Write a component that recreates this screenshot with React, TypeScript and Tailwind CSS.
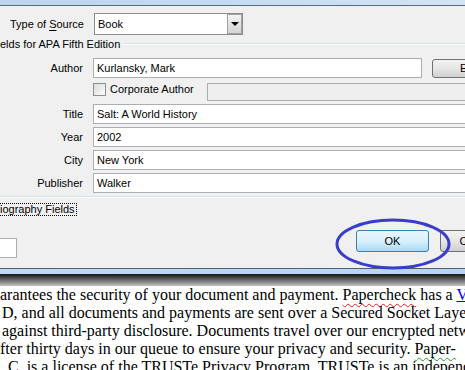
// Source editor dialog over a document page, with a hand-drawn ring around OK
const sans = "font-['Liberation_Sans',Arial,sans-serif]";

function TextBox({ value, className = "" }: { value?: string; className?: string }) {
	return (
		<div
			className={`flex h-[20px] items-center border border-[#abadb3] bg-white pl-[3px] text-[11px] text-black ${className}`}
		>
			{value}
		</div>
	);
}

function FieldRow({ label, value, last }: { label: string; value: string; last?: boolean }) {
	return (
		<div className="mt-[3px] flex h-[20px] items-center">
			<div className="w-[83px] shrink-0 text-right">{label}</div>
			<TextBox value={value} className={`ml-[10px] ${last ? "" : ""} w-[400px] shrink-0`} />
		</div>
	);
}

function WinButton({ label, primary, className = "" }: { label: string; primary?: boolean; className?: string }) {
	return (
		<div
			className={`flex shrink-0 items-center justify-center rounded-[3px] border ${
				primary
					? "border-[#3c7fb1] bg-gradient-to-b from-[#eaf6fd] via-[#d9f0fc] to-[#a7d9f5]"
					: "border-[#707070] bg-gradient-to-b from-[#f2f2f2] via-[#e6e6e6] to-[#cfcfcf]"
			} ${className}`}
		>
			{label}
		</div>
	);
}

function Dialog() {
	return (
		<div className={`flex h-[268px] flex-col ${sans} text-[11px] text-black`}>
			<div className="h-[5px] bg-gradient-to-r from-[#bcd5ee] via-[#c4dcf3] to-[#d2e4f5]" />
			<div className="h-px bg-[#5d6a78]" />
			<div className="flex-1 overflow-hidden bg-[#f0f0f0] pt-[7px]">
				{/* type of source */}
				<div className="flex h-[22px] items-center">
					<div className="w-[84px] shrink-0 text-right">
						Type of <span className="underline underline-offset-[2px]">S</span>ource
					</div>
					<div className="ml-[10px] flex h-[22px] w-[149px] border border-[#8c8c8c] bg-white">
						<div className="flex flex-1 items-center pl-[3px]">Book</div>
						<div className="flex w-[15px] items-center justify-center border border-[#a0a0a0] bg-gradient-to-b from-[#f4f4f4] to-[#d4d4d4]">
							<div className="h-0 w-0 border-x-[4px] border-t-[4px] border-x-transparent border-t-black" />
						</div>
					</div>
				</div>

				{/* group legend */}
				<div className="mt-[2px] flex h-[14px] items-center">
					<span className="whitespace-nowrap">elds for APA Fifth Edition</span>
					<div className="ml-[3px] h-[2px] flex-1 border-t border-b border-t-[#d5dfe5] border-b-white" />
				</div>

				{/* author */}
				<div className="mt-[7px] flex h-[20px] items-center">
					<div className="w-[83px] shrink-0 text-right">Author</div>
					<TextBox value="Kurlansky, Mark" className="ml-[10px] w-[329px] shrink-0" />
					<WinButton label="Edit" className="ml-[10px] h-[19px] w-[75px]" />
				</div>

				{/* corporate author */}
				<div className="mt-[5px] flex h-[18px] items-start">
					<div className="ml-[93px] flex h-[13px] w-[114px] shrink-0 items-center gap-[4px]">
						<div className="h-[13px] w-[13px] shrink-0 border border-[#8e8f8f] bg-gradient-to-br from-[#dcdcdc] to-[#fbfbfb]" />
						<span className="whitespace-nowrap">Corporate Author</span>
					</div>
					<div className="h-[18px] w-[300px] shrink-0 border border-[#adadad] bg-[#efefef]" />
				</div>

				<FieldRow label="Title" value="Salt: A World History" />
				<FieldRow label="Year" value="2002" />
				<FieldRow label="City" value="New York" />
				<FieldRow label="Publisher" value="Walker" last />

				{/* group bottom */}
				<div className="mt-[3px] h-[2px] border-t border-b border-t-[#d5dfe5] border-b-white" />

				{/* show all fields */}
				<div className="mt-[5px] flex h-[13px]">
					<span className="-ml-[2px] whitespace-nowrap border border-dotted border-black px-[1px] leading-[11px]">
						iography Fields
					</span>
				</div>

				{/* bottom buttons */}
				<div className="mt-[14px] flex items-start">
					<div className="mt-[8px] h-[20px] w-[17px] shrink-0 border border-[#abadb3] border-l-0 bg-white" />
					<WinButton label="OK" primary className="ml-[339px] h-[22px] w-[73px]" />
					<WinButton label="Cancel" className="ml-[11px] h-[22px] w-[73px]" />
				</div>
			</div>
		</div>
	);
}

function Page() {
	const red = "underline decoration-wavy decoration-[#e02020] decoration-1 underline-offset-[3px]";
	const green = "underline decoration-wavy decoration-[#2a9a2a] decoration-1 underline-offset-[3px]";
	return (
		<div>
			<div className="h-px bg-[#555f6c]" />
			<div className="h-[5px] bg-gradient-to-r from-[#bfdaf5] to-[#b7d5f2]" />
			<div className="h-[12px] bg-gradient-to-b from-[#161616] via-[#6b6b6b] to-[#c4c4c4]" />
			<div className="font-['Liberation_Serif','Times_New_Roman',serif] text-[16px] leading-[18px] text-black">
				<p className="whitespace-nowrap">
					arantees the security of your document and payment. <span className={red}>Papercheck</span> has a{" "}
					<span className="text-[#0000ee] underline">VeriSign</span>
				</p>
				<p className="whitespace-nowrap pl-[2px]">D, and all documents and payments are sent over a Secured Socket Layer</p>
				<p className="whitespace-nowrap pl-[2px]">against third-party disclosure. Documents travel over our encrypted network</p>
				<p className="whitespace-nowrap">
					fter thirty days in our queue to ensure your privacy and security. <span className={green}>Paper-</span>
				</p>
				<p className="whitespace-nowrap pl-[8px]">C. is a license of the TRUSTe Privacy Program. TRUSTe is an independent</p>
			</div>
		</div>
	);
}

export default function App() {
	return (
		<div className="relative h-[370px] w-[465px] overflow-hidden bg-white">
			<Dialog />
			<Page />
			<svg className="pointer-events-none absolute left-0 top-0" width="465" height="370">
				<ellipse cx="393" cy="244" rx="56" ry="24" fill="none" stroke="#3a3dcc" strokeWidth="3" />
			</svg>
		</div>
	);
}
